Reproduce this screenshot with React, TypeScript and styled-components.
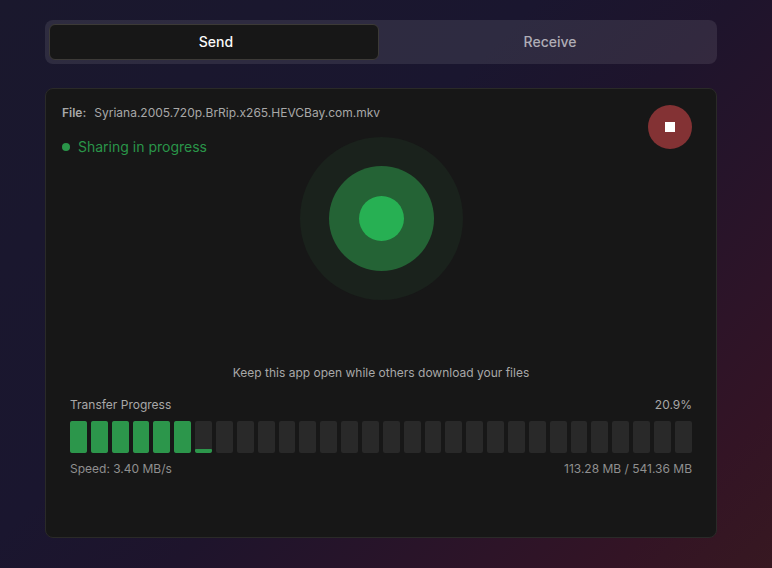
import React, { useState } from "react";
import styled, { createGlobalStyle } from "styled-components";

const GlobalStyle = createGlobalStyle`
  *, *::before, *::after { box-sizing: border-box; }
  body {
    margin: 0;
    font-family: Inter, "Liberation Sans", sans-serif;
    color: #a8a8a8;
    background: #1a172d;
  }
  button { font: inherit; color: inherit; cursor: pointer; }
`;

const Page = styled.div`
  min-height: 100vh;
  display: flex;
  flex-direction: column;
  gap: 24px;
  padding: 20px 55px 30px 45px;
  background: linear-gradient(135deg, #1a182d 0%, #1a162f 40%, #1e142c 55%, #2d1428 78%, #331425 88%, #371821 100%);
`;

const TabList = styled.div`
  display: flex;
  gap: 4px;
  padding: 4px;
  border-radius: 8px;
  background: rgba(255, 255, 255, 0.09);
`;

const Tab = styled.button<{ $active: boolean }>`
  flex: 1;
  height: 36px;
  padding: 0 12px 0 16px;
  border: 1px solid ${(p) => (p.$active ? "#3c3a37" : "transparent")};
  border-radius: 6px;
  background: ${(p) => (p.$active ? "#171717" : "transparent")};
  color: ${(p) => (p.$active ? "#fafafa" : "#afadb6")};
  font-size: 14px;
  font-weight: 500;
  line-height: 20px;
`;

const Card = styled.main`
  flex: 1;
  display: flex;
  flex-direction: column;
  padding: 16px;
  border: 1px solid #2a2a28;
  border-radius: 8px;
  background: #171717;
  font-size: 12px;
  line-height: 16px;
`;

const Overview = styled.section`
  display: grid;
  grid-template-columns: 1fr auto 1fr;
  grid-template-rows: 16px auto;
  row-gap: 16px;
  align-items: start;
`;

const FileRow = styled.div`
  grid-column: 1 / 3;
  grid-row: 1;
  display: flex;
  gap: 8px;
`;

const FileLabel = styled.span`
  font-weight: 600;
`;

const Status = styled.div`
  grid-column: 1;
  grid-row: 2;
  display: flex;
  align-items: center;
  gap: 8px;
  color: #2a9549;
  font-size: 14px;
  line-height: 20px;
  white-space: nowrap;
`;

const StatusDot = styled.span`
  width: 8px;
  height: 8px;
  border-radius: 50%;
  background: currentColor;
`;

const StopButton = styled.button`
  grid-column: 3;
  grid-row: 1 / 3;
  justify-self: end;
  display: grid;
  place-items: center;
  width: 44px;
  height: 44px;
  margin-right: 8px;
  padding: 0;
  border: 0;
  border-radius: 50%;
  background: #833234;
`;

const StopIcon = styled.span`
  width: 10px;
  height: 10px;
  background: #fff;
`;

const Ring = styled.div<{ $size: number; $color: string }>`
  display: grid;
  place-items: center;
  width: ${(p) => p.$size}px;
  height: ${(p) => p.$size}px;
  border-radius: 50%;
  background: ${(p) => p.$color};
`;

const Pulse = styled(Ring)`
  grid-column: 2;
  grid-row: 2;
`;

const Hint = styled.p`
  margin: 65px 0 16px;
  text-align: center;
`;

const Transfer = styled.section`
  display: flex;
  flex-direction: column;
  gap: 8px;
  padding: 0 8px;
`;

const Line = styled.div<{ $muted?: boolean }>`
  display: flex;
  justify-content: space-between;
  color: ${(p) => (p.$muted ? "#8f8f8f" : "#a8a8a8")};
`;

const Bars = styled.div`
  display: flex;
  gap: 4px;
  height: 32px;
`;

const Bar = styled.div`
  flex: 1;
  display: flex;
  align-items: flex-end;
  overflow: hidden;
  border-radius: 2px;
  background: #292929;
`;

const Fill = styled.div`
  width: 100%;
  border-radius: 1px;
  background: #2c964b;
`;

const SEGMENTS = 30;
const levels = Array.from({ length: SEGMENTS }, (_, i) => (i < 6 ? 100 : i === 6 ? 13 : 0));
const tabs = ["Send", "Receive"];

export default function App() {
  const [active, setActive] = useState("Send");

  return (
    <>
      <GlobalStyle />
      <Page>
        <TabList role="tablist">
          {tabs.map((name) => (
            <Tab
              key={name}
              type="button"
              role="tab"
              aria-selected={active === name}
              $active={active === name}
              onClick={() => setActive(name)}
            >
              {name}
            </Tab>
          ))}
        </TabList>
        <Card>
          <Overview>
            <FileRow>
              <FileLabel>File:</FileLabel>
              <span>Syriana.2005.720p.BrRip.x265.HEVCBay.com.mkv</span>
            </FileRow>
            <Status role="status">
              <StatusDot />
              Sharing in progress
            </Status>
            <Pulse $size={163} $color="#1a221c" aria-hidden="true">
              <Ring $size={105} $color="#246335">
                <Ring $size={45} $color="#27b053" />
              </Ring>
            </Pulse>
            <StopButton type="button" aria-label="Stop sharing">
              <StopIcon />
            </StopButton>
          </Overview>
          <Hint>Keep this app open while others download your files</Hint>
          <Transfer>
            <Line>
              <span id="transfer-label">Transfer Progress</span>
              <span>20.9%</span>
            </Line>
            <Bars
              role="progressbar"
              aria-labelledby="transfer-label"
              aria-valuemin={0}
              aria-valuemax={100}
              aria-valuenow={20.9}
            >
              {levels.map((level, i) => (
                <Bar key={i}>{level > 0 && <Fill style={{ height: `${level}%` }} />}</Bar>
              ))}
            </Bars>
            <Line $muted>
              <span>Speed: 3.40 MB/s</span>
              <span>113.28 MB / 541.36 MB</span>
            </Line>
          </Transfer>
        </Card>
      </Page>
    </>
  );
}
